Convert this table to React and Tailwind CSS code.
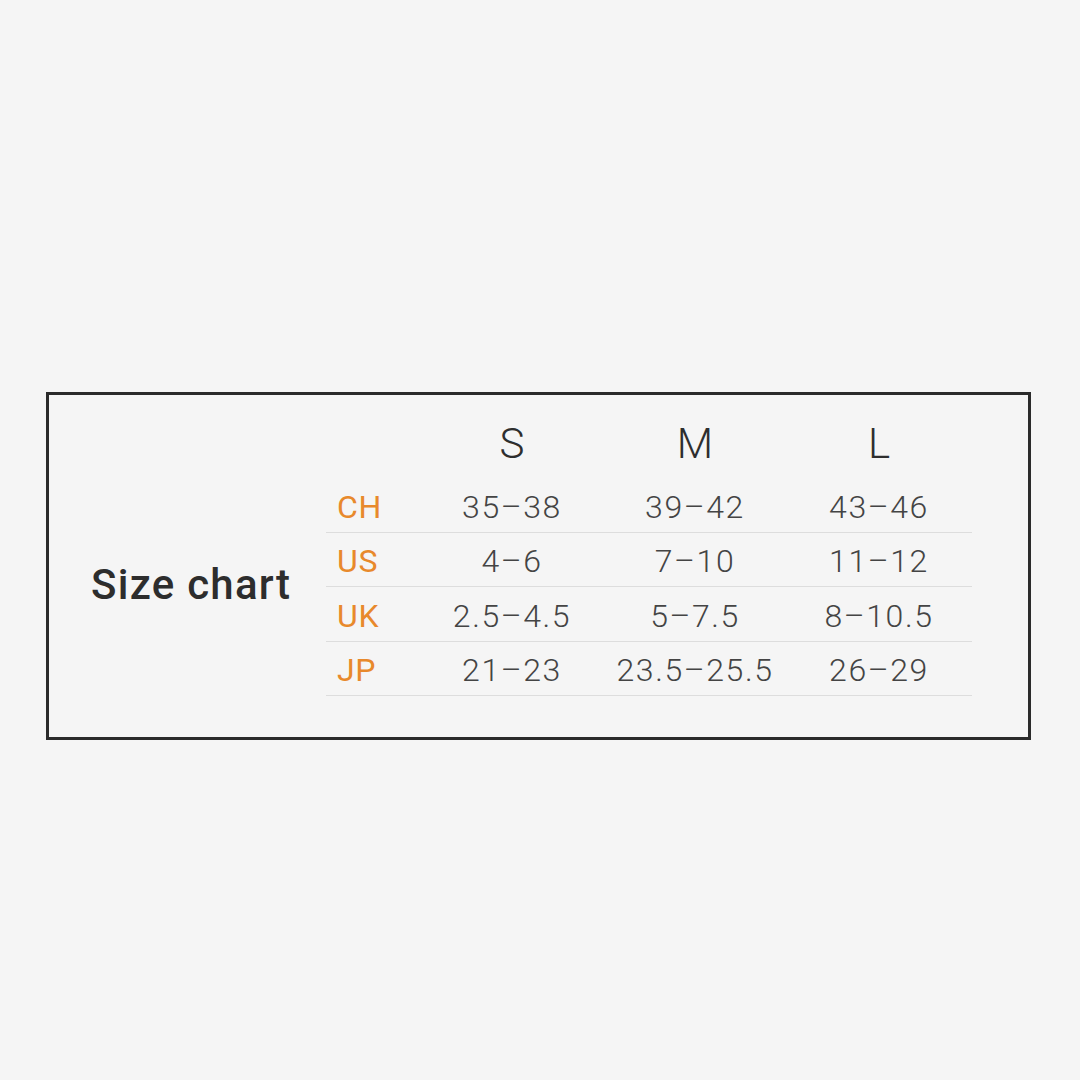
import React from "react";

const sizes = ["S", "M", "L"];

const rows = [
  { region: "CH", values: ["35–38", "39–42", "43–46"] },
  { region: "US", values: ["4–6", "7–10", "11–12"] },
  { region: "UK", values: ["2.5–4.5", "5–7.5", "8–10.5"] },
  { region: "JP", values: ["21–23", "23.5–25.5", "26–29"] },
];

const colWidths = ["w-[184px]", "w-[182px]", "w-[186px]"];

export default function App() {
  return (
    <div className="w-full h-[1080px] bg-[#f5f5f5] pt-[392px] pl-[46px] font-['Roboto',sans-serif]">
      <div className="w-[985px] h-[348px] border-[3px] border-[#2b2b2b] pt-[19px] pb-[41px]">
        {/* size header */}
        <div className="flex h-[64px] items-center">
          <div className="w-[371px] shrink-0" />
          {sizes.map((s, i) => (
            <div
              key={s}
              className={`${colWidths[i]} text-center text-[42px] font-light text-[#2e2e2e] leading-none -mt-[4px]`}
            >
              {s}
            </div>
          ))}
        </div>

        <div className="flex items-center">
          <div className="w-[277px] shrink-0 pl-[42px]">
            <p className="text-[42px] font-medium text-[#2d2d2d] leading-none tracking-[0.03em] mt-[-4px] whitespace-nowrap">
              Size chart
            </p>
          </div>
          <div className="w-[646px]">
            {rows.map((row) => (
              <div
                key={row.region}
                className="flex h-[54.5px] items-center border-b border-[#dddddd] pt-[4px]"
              >
                <div className="w-[94px] pl-[11px] text-[32px] text-[#e8892c] leading-none tracking-[0.02em]">
                  {row.region}
                </div>
                {row.values.map((v, i) => (
                  <div
                    key={i}
                    className={`${colWidths[i]} text-center text-[32px] font-light text-[#444444] leading-none tracking-[0.05em]`}
                  >
                    {v}
                  </div>
                ))}
              </div>
            ))}
          </div>
        </div>
      </div>
    </div>
  );
}
